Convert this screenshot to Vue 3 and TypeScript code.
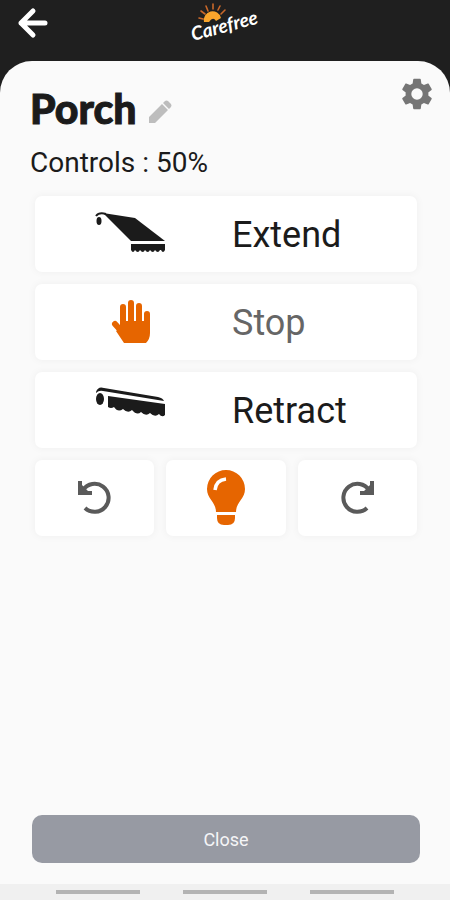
<script setup lang="ts">
import { ref } from 'vue'

type Motion = 'extend' | 'stop' | 'retract'

const deviceName = ref('Porch')
const position = ref(50)
const motions: { id: Motion; label: string }[] = [
  { id: 'extend', label: 'Extend' },
  { id: 'stop', label: 'Stop' },
  { id: 'retract', label: 'Retract' },
]
</script>

<template>
  <div class="screen">
    <header class="top-bar">
      <button class="icon-button back" type="button" aria-label="Back">
        <svg width="32" height="32" viewBox="0 0 32 32">
          <path d="M28 16H4M16 4L4 16l12 12" fill="none" stroke="#fff" stroke-width="5" stroke-linecap="round" stroke-linejoin="round" />
        </svg>
      </button>
      <svg class="logo" width="72" height="44" viewBox="0 0 72 44" role="img" aria-label="Carefree">
        <g fill="none" stroke="#c9682a" stroke-width="1.6" stroke-linecap="round">
          <path d="M10 17l4 1M12 10l4 3M17 5l2 5M24 3v5M31 5l-2 4M36 9l-4 4" />
        </g>
        <path d="M15 21a8.500 8.500 0 0 1 17-4l-5 3q-3-5-7 1z" fill="#f9a52c" />
        <text x="4" y="40" transform="rotate(-15 4 40)" class="logo-text">Carefree</text>
      </svg>
    </header>

    <main class="sheet">
      <div class="heading">
        <h1>{{ deviceName }}</h1>
        <button class="icon-button edit" type="button" aria-label="Edit name">
          <svg width="24" height="24" viewBox="0 0 24 24" fill="#bdbdbd">
            <path d="M1 23v-6L14 4l6 6L7 23zM15 3L17 1q1.500-1 3 0l3 3q1 1.500 0 3l-2 2z" />
          </svg>
        </button>
        <button class="icon-button settings" type="button" aria-label="Settings">
          <svg width="38" height="38" viewBox="0 0 24 24" fill="#757575">
            <path d="M19.140 12.940c.040-.300.060-.610.060-.940 0-.320-.020-.640-.070-.940l2.030-1.580c.180-.140.230-.410.120-.610l-1.920-3.320c-.120-.220-.370-.290-.590-.220l-2.390.960c-.500-.380-1.030-.700-1.620-.940l-.360-2.540c-.040-.240-.240-.410-.480-.410h-3.840c-.240 0-.430.170-.470.410l-.360 2.540c-.590.240-1.130.570-1.620.940l-2.390-.960c-.220-.080-.470 0-.590.220L2.740 8.870c-.120.210-.080.470.120.610l2.030 1.580c-.050.300-.090.630-.090.940s.020.640.070.940l-2.030 1.580c-.180.140-.230.410-.120.610l1.920 3.320c.120.220.370.290.590.220l2.390-.960c.500.380 1.030.700 1.620.940l.360 2.540c.050.240.240.410.480.410h3.840c.240 0 .440-.170.470-.410l.360-2.540c.590-.240 1.130-.560 1.620-.940l2.390.960c.220.080.470 0 .590-.220l1.920-3.320c.120-.220.070-.470-.120-.610zM12 15.600a3.600 3.600 0 1 1 0-7.200 3.600 3.600 0 0 1 0 7.200z" />
          </svg>
        </button>
      </div>
      <p class="status">Controls : {{ position }}%</p>

      <div class="controls">
        <button v-for="m in motions" :key="m.id" type="button" class="card motion" :class="m.id">
          <span class="picture">
            <svg v-if="m.id === 'extend'" width="72" height="46" viewBox="0 0 72 46" fill="#1b1b1b">
              <path d="M8 2L40 7L70 30H36z" />
              <path d="M1 5Q4 1 11 3" fill="none" stroke="#1b1b1b" stroke-width="2" />
              <ellipse cx="4" cy="10" rx="2.500" ry="4" />
              <path d="M36 33h34v6q-2 4-4 0h-1q-2 4-5 0-2 4-5 0-2 4-5 0-2 4-5 0-2 4-5 0-2 4-4 0z" />
            </svg>
            <svg v-else-if="m.id === 'stop'" width="40" height="46" viewBox="0 0 40 46" fill="#e66500">
              <g fill="none" stroke="#e66500" stroke-width="6" stroke-linecap="round">
                <path d="M12 8v22M20 4v26M28 7v23M36 15v17M4 25l9 10" />
              </g>
              <path d="M9 22h30v12q0 6-4 10H13L5 32l4-3z" />
            </svg>
            <svg v-else width="72" height="40" viewBox="0 0 72 40" fill="#1b1b1b">
              <path d="M1 6Q3 0 9 2l54 9q5 1 6 4L8 5Q4 4 1 7z" />
              <ellipse cx="5" cy="13" rx="4" ry="6" />
              <path d="M13 10l57 8v11q-3 3-6-1-4 4-9-1-4 4-9-1-4 4-9-2-4 4-9-1-5 4-9-2-3 2-6 0z" />
            </svg>
          </span>
          <span class="label">{{ m.label }}</span>
        </button>

        <div class="trio">
          <button type="button" class="card" aria-label="Tilt back">
            <svg width="36" height="36" viewBox="0 0 36 36">
              <path d="M6 10A14 14 0 1 1 8 28" fill="none" stroke="#5a5a5a" stroke-width="4" />
              <path d="M1 1h4v4l6 6h4v4H1z" fill="#5a5a5a" />
            </svg>
          </button>
          <button type="button" class="card" aria-label="Light">
            <svg width="40" height="56" viewBox="0 0 40 56" fill="#e66500">
              <path d="M10 42C10 32 1 29 1 19a19 19 0 0 1 38 0c0 10-9 13-9 23zM11 45h18v3q0 7-7 7h-4q-7 0-7-7z" />
              <path d="M9 20Q10 10 20 9" fill="none" stroke="#fff" stroke-width="3.500" />
            </svg>
          </button>
          <button type="button" class="card" aria-label="Tilt forward">
            <svg width="36" height="36" viewBox="0 0 36 36">
              <path d="M30 10A14 14 0 1 0 28 28" fill="none" stroke="#5a5a5a" stroke-width="4" />
              <path d="M35 1h-4v4l-6 6h-4v4h14z" fill="#5a5a5a" />
            </svg>
          </button>
        </div>
      </div>

      <button type="button" class="close">Close</button>
    </main>

    <div class="system-nav" aria-hidden="true">
      <span></span><span></span><span></span>
    </div>
  </div>
</template>

<style>
body {
  background: #1f1f1f;
}
</style>

<style scoped>
.screen {
  display: flex;
  flex-direction: column;
  min-height: 100vh;
  background: #1f1f1f;
  color: #1b1b1b;
  font-family: Roboto, "Liberation Sans", sans-serif;
}

button {
  margin: 0;
  padding: 0;
  border: 0;
  color: inherit;
  font-family: inherit;
  cursor: pointer;
}

svg {
  display: block;
}

.icon-button {
  background: none;
}

.top-bar {
  display: grid;
  grid-template-columns: 1fr auto 1fr;
  align-items: center;
  padding: 1px 17px 16px;
}

.back {
  justify-self: start;
}

.logo {
  overflow: visible;
}

.logo-text {
  fill: #fff;
  font-family: Lato, sans-serif;
  font-size: 19px;
  font-style: italic;
  font-weight: 700;
}

.sheet {
  flex: 1;
  display: flex;
  flex-direction: column;
  padding: 14px 30px 21px;
  background: #fafafa;
  border-radius: 32px 32px 0 0;
}

.heading {
  display: flex;
  align-items: center;
  height: 68px;
}

h1 {
  margin: 0;
  font-family: Lato, sans-serif;
  font-size: 41px;
  font-weight: 900;
  line-height: 48px;
  -webkit-text-stroke: 1px #1b1b1b;
}

.edit {
  margin: 6px 0 0 11px;
}

.settings {
  align-self: flex-start;
  margin-left: auto;
  margin-right: -16px;
}

.status {
  margin: 0;
  font-size: 28px;
  font-weight: 400;
  line-height: 40px;
}

.controls {
  display: flex;
  flex-direction: column;
  gap: 12px;
  padding: 13px 3px 0 5px;
}

.card {
  display: flex;
  align-items: center;
  justify-content: center;
  height: 76px;
  background: #fff;
  border-radius: 7px;
  box-shadow: 0 0 8px rgba(0, 0, 0, 0.05);
}

.motion {
  display: grid;
  grid-template-columns: 1fr 1fr;
}

.picture {
  display: flex;
  justify-content: center;
}

.retract .picture {
  padding-bottom: 8px;
}

.label {
  padding: 2px 0 0 6px;
  font-size: 36px;
  font-weight: 400;
  line-height: 44px;
  text-align: left;
}

.stop .label {
  color: #666;
}

.trio {
  display: grid;
  grid-template-columns: repeat(3, 1fr);
  gap: 12px;
}

.close {
  height: 48px;
  margin: auto 0 0 2px;
  background: #979aa3;
  border-radius: 10px;
  color: #f5f5f7;
  font-size: 18px;
}

.system-nav {
  display: flex;
  justify-content: space-between;
  padding: 6px 56px;
  background: #f0f0f0;
}

.system-nav span {
  width: 84px;
  height: 4px;
  background: #b3b3b3;
}
</style>
